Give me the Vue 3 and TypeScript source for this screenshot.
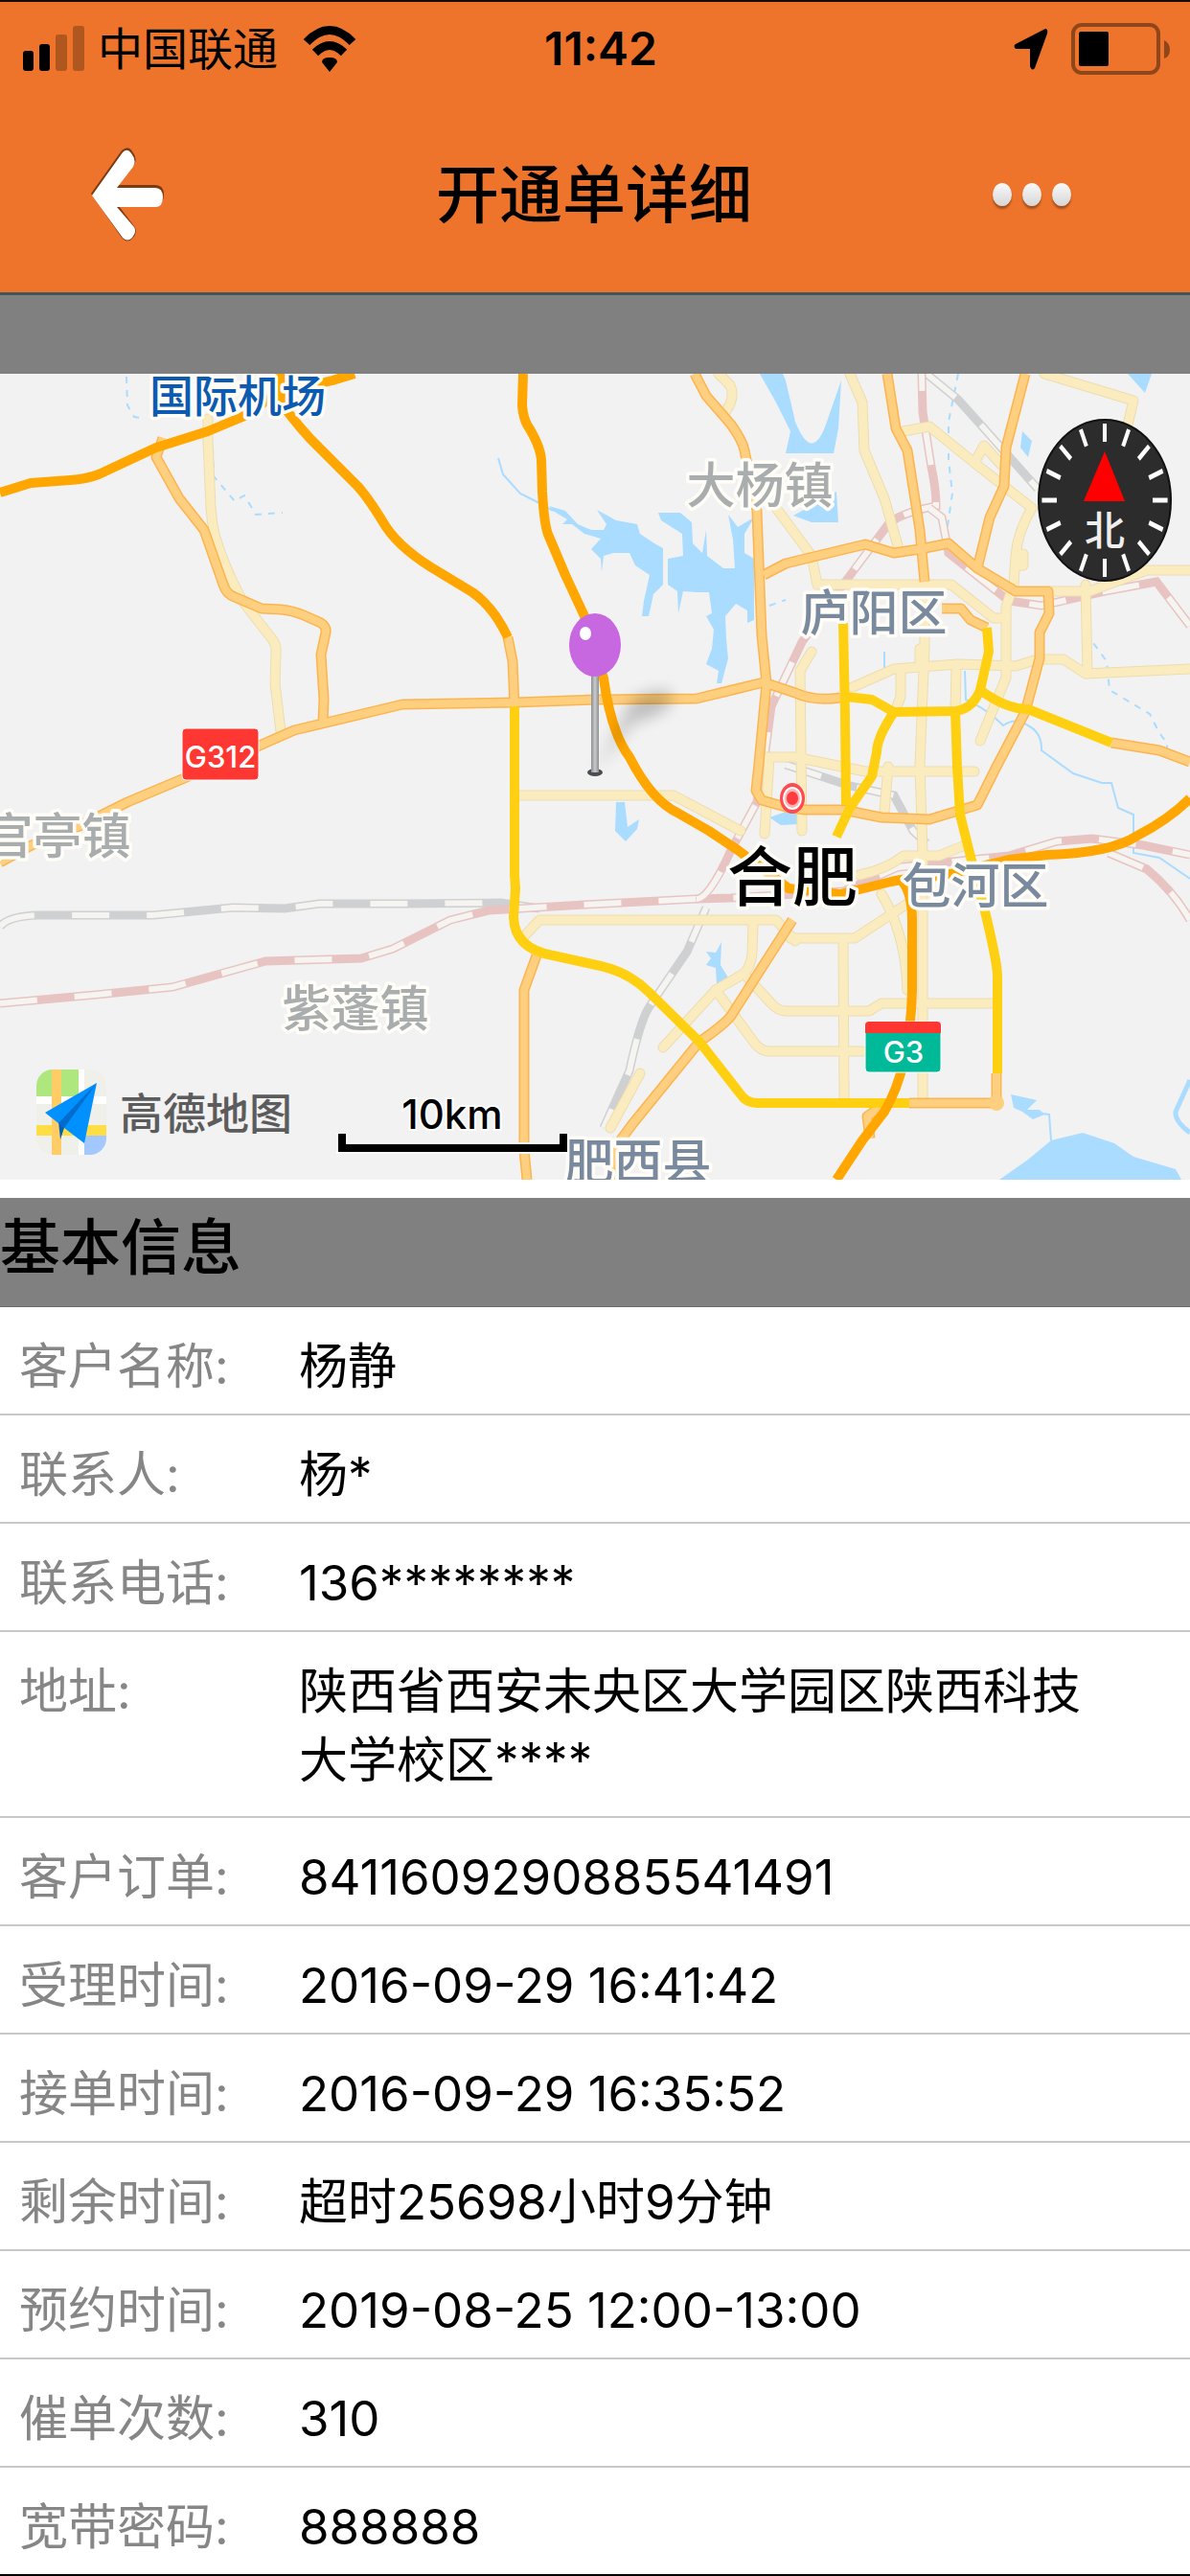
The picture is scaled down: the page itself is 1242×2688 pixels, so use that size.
<script setup lang="ts">
interface Field {
  label: string
  value: string
}

interface Place {
  name: string
  x: number
  y: number
  kind: string
}

const fields: Field[] = [
  { label: '客户名称:', value: '杨静' },
  { label: '联系人:', value: '杨*' },
  { label: '联系电话:', value: '136********' },
  { label: '地址:', value: '陕西省西安未央区大学园区陕西科技大学校区****' },
  { label: '客户订单:', value: '8411609290885541491' },
  { label: '受理时间:', value: '2016-09-29 16:41:42' },
  { label: '接单时间:', value: '2016-09-29 16:35:52' },
  { label: '剩余时间:', value: '超时25698小时9分钟' },
  { label: '预约时间:', value: '2019-08-25 12:00-13:00' },
  { label: '催单次数:', value: '310' },
  { label: '宽带密码:', value: '888888' },
]

const places: Place[] = [
  { name: '国际机场', x: 248, y: 40, kind: 'airport' },
  { name: '大杨镇', x: 793, y: 135, kind: 'town' },
  { name: '官亭镇', x: 60, y: 501, kind: 'town' },
  { name: '紫蓬镇', x: 371, y: 681, kind: 'town' },
  { name: '庐阳区', x: 912, y: 268, kind: 'district' },
  { name: '包河区', x: 1018, y: 553, kind: 'district' },
  { name: '肥西县', x: 666, y: 841, kind: 'district' },
  { name: '合肥', x: 827, y: 550, kind: 'city' },
]

const streams: string[] = [
  'M520 88L525 105L543 125L563 135L577 143',
  'M1007 310L1008 340Q1030 350 1047 367Q1060 358 1073 367Q1088 375 1087 393L1120 417L1150 427L1160 427L1167 453L1183 460V500L1210 505L1242 527',
  'M1073 770L1095 773L1097 800',
  'M923 290V313M968 187L978 175',
]

const dashedStreams: string[] = [
  'M132 3L133 33L140 45L152 47',
  'M222 77L223 107L245 133L255 127L267 147L295 145',
  'M803 242L820 236M1000 0L990 50L990 90L994 125L988 165',
  'M1133 270L1155 300L1158 330L1200 355L1210 375L1218 385V400',
]

const lakes: string[] = [
  'M623 142L643 153L665 157L668 167L683 177L692 182V220L682 230L677 253H670L672 237L678 210L663 200L657 187H640L630 190L628 207L627 193L617 183L627 172L610 167L597 157H587L592 152L577 143L573 138L590 143L603 157L617 163H630L633 157Z',
  'M687 145H710L722 155L723 177L733 187L737 163L738 190L755 203H767L765 173L760 147L770 160L787 150L777 167V187L787 193V257L780 260V247L768 240L757 253L758 277L760 297L753 323H748L750 310L737 303L743 287L745 267L737 253L743 250L740 228H727L713 227L708 250L707 227L697 220V193L713 190L712 167L690 153Z',
  'M793 0H817L820 7L830 50Q848 95 863 50L878 7L875 57L870 83H820L825 60L810 30Z',
  'M828 148L873 123L875 155H847Z',
  'M643 447H652L655 473L667 465L665 475L653 488L642 477Z',
  'M737 603L747 604L753 593L752 617L760 630L748 637L747 620L737 617L742 610Z',
  'M803 463L820 457L834 455V470L815 471Z',
  'M1043 841L1073 820L1097 800L1130 792L1163 803L1183 817L1227 830L1233 841Z',
  'M1055 752L1082 758L1072 768H1085L1090 773L1078 778L1067 770L1058 766Z',
  'M1177 0H1202L1195 20Z',
  'M1067 60L1077 70L1073 87L1065 77Z',
]

const localRoads: string[] = [
  'M217 47V70L220 140Q222 165 227 177Q235 203 253 237L284 277Q289 283 288 293L287 323L293 373',
  'M540 440H703L773 477',
  'M547 587L563 570H810L830 592',
  'M786 573L785 605Q783 623 773 628L747 643L692 703',
  'M780 630L805 657Q812 665 820 665H907L920 657H1037',
  'M747 643L785 695Q793 707 803 707H900',
  'M668 730L637 787',
  'M825 589H892L947 553',
  'M880 590L881 757',
  'M963 757V500L960 410L962 357L965 287V217',
  'M920 543Q945 583 947 643',
  'M897 523Q925 517 943 503H980L1007 492',
  'M798 480L803 400M800 400H830L903 415H1017',
  'M837 477L835 310L847 290',
  'M890 327L933 308L1000 303L1060 305L1083 298H1110L1133 313L1242 308',
  'M1133 220L1135 313',
  'M887 0L900 30L902 80L923 130L938 183',
  'M943 60L970 55L1017 93L1077 140Q1062 165 1060 190L1058 220L1050 243V317L1023 383',
  'M1090 0L1183 28L1177 53',
  'M1095 227H1137L1197 205H1242',
  'M810 140L847 190L853 220H993L1037 255H1050',
  'M750 0L762 12Q768 25 757 40',
  'M940 310V337L935 350M998 310L997 350',
  'M927 410L923 457M1017 93L1027 75L1045 95',
  'M960 300V287M1063 200H1068V188',
]

const mainRoads: string[] = [
  'M170 67L163 87L187 130L213 163L233 220Q236 230 245 233L273 245L293 246Q305 247 317 252L335 260Q341 264 340 270L335 293L338 340L337 363',
  'M0 510L33 492L83 472L133 447L190 423L273 387L307 372L420 345L537 343L623 340L727 339L797 322L830 333Q850 342 877 338',
  'M725 0L737 23L763 53Q775 70 777 80L790 143L792 197L795 273L800 323L792 407L789 435L795 445L820 452L840 455H880L920 463L970 465L1020 450L1040 410L1070 353L1085 297V270L1095 250L1094 227H1060L1020 203L990 177L960 183L933 187L903 178L853 190L820 198L797 210',
  'M926 0L935 57L947 80L960 163L965 217',
  'M1070 0L1050 77L1048 117L1033 150L1020 203',
  'M983 245H1003L1013 257L1030 265',
  'M530 275L535 300L537 347',
  'M560 607L547 643V810L550 841',
  'M827 570L793 623L763 670Q755 680 730 697L660 783L640 810L636 841',
  'M949 761H1040V730',
  'M1160 385L1210 393L1242 405',
  'M923 762L905 775L908 798',
]

const ringRoads: string[] = [
  'M537 347V523L538 537L536 567Q537 600 577 607L627 618Q657 625 677 645L730 697L773 752Q779 761 790 761H949',
  'M1041 730V627Q1040 610 1027 557L1012 500L1002 460L999 410L997 352',
  'M1030 265L1032 290L1023 330Q1015 350 997 352L933 353L910 340L883 337',
  'M1023 330Q1050 350 1073 350L1160 385',
  'M880 260L882 357L883 450',
  'M933 353Q915 380 915 395L910 420L887 453L873 483',
]

const highways: string[] = [
  'M0 124L32 114L73 111Q90 110 103 105L163 77L217 60L253 45L290 20L347 7L370 0',
  'M292 0L293 30Q315 60 333 77L373 117Q385 130 403 160Q420 185 460 208L493 228Q515 243 530 275',
  'M546 0L545 33Q546 45 550 53Q564 75 565 90L566 123Q568 160 573 170L590 210L610 253L630 318Q638 375 657 400Q680 445 707 458L740 477L770 497L823 537L877 543L930 530Q940 528 940 528Q952 540 952 570V643Q950 725 923 770L900 800L873 841',
  'M940 528L987 523L1053 507L1093 502Q1160 500 1187 482Q1220 465 1242 443',
]

const greyRails: string[] = [
  'M0 577Q8 566 40 565H160L243 557L297 558L333 553H420L523 552L563 558',
  'M967 0L1000 27L1027 57L1083 120',
  'M737 557L717 603L678 660Q668 675 657 727L630 787',
  'M820 408L887 430L933 440L953 477L967 490',
]

const pinkRails: string[] = [
  'M0 657L100 648L180 640L277 613L377 610L410 600L470 570L510 560L610 554L727 548L763 547L880 540L937 515L1053 503L1103 488L1140 485L1193 492L1242 502',
  'M727 548Q740 548 763 497L790 447L798 400L805 347L837 280L880 220L927 157Q940 145 977 138Q977 120 972 97L963 40L962 0',
  'M970 140L983 150L990 187L1053 237L1087 242L1153 227L1207 217L1242 263',
  'M1157 500L1197 517Q1225 540 1242 570',
]

const ticks: number[] = Array.from({ length: 16 }, (_, i) => i * 22.5)
</script>

<template>
  <div class="screen">
    <header class="top">
      <div class="status">
        <div class="status-left">
          <svg class="signal" viewBox="0 0 64 48" width="64" height="48" aria-hidden="true">
            <rect x="0" y="26" width="11" height="21" rx="3" />
            <rect x="17" y="19" width="11" height="28" rx="3" />
            <rect x="34" y="9" width="12" height="38" rx="3" fill="#b0561f" />
            <rect x="52" y="0" width="12" height="47" rx="3" fill="#b0561f" />
          </svg>
          <span class="carrier">中国联通</span>
          <svg class="wifi" viewBox="0 0 56 48" width="56" height="48" aria-hidden="true">
            <path d="M4 17Q28 -8 52 17" fill="none" stroke="#000" stroke-width="9" />
            <path d="M13 28Q28 13 43 28" fill="none" stroke="#000" stroke-width="9" />
            <path d="M28 48L20 38Q20 33 28 33Q36 33 36 38Z" />
          </svg>
        </div>
        <time class="clock">11:42</time>
        <div class="status-right">
          <svg viewBox="0 0 36 44" width="36" height="44" aria-hidden="true">
            <path d="M33 1Q36 1 35 6L22 42Q19 46 17 40V22H2Q-1 19 2 17Z" />
          </svg>
          <svg class="battery" viewBox="0 0 104 54" width="104" height="54" aria-hidden="true">
            <rect x="2" y="2" width="89" height="50" rx="9" fill="none" stroke="#8f461a" stroke-width="4" />
            <rect x="8" y="9" width="31" height="36" rx="2" />
            <path d="M97 18Q103 21 103 28T97 37Z" fill="#8f461a" />
          </svg>
        </div>
      </div>
      <nav class="bar">
        <button class="back" type="button" aria-label="返回">
          <svg viewBox="0 0 80 98" width="80" height="98" aria-hidden="true">
            <path class="arrow-shadow" d="M1 48L33 3Q40 -3 44 4Q50 11 46 18L29 39H68Q77 39 77 49T68 61H30L46 82Q50 88 45 94Q39 101 33 94Z" />
            <path d="M2 50L34 5Q39 0 43 6Q49 13 45 20L28 42H68Q76 42 76 52T68 62H28L46 83Q49 88 44 94Q39 99 34 94Z" fill="#fff" />
          </svg>
        </button>
        <h1 class="title">开通单详细</h1>
        <button class="more" type="button" aria-label="更多">
          <span class="dot"></span>
          <span class="dot"></span>
          <span class="dot"></span>
        </button>
      </nav>
    </header>

    <div class="band"></div>

    <section class="map-section" aria-label="地图">
      <svg class="map" viewBox="0 0 1242 841">
        <defs>
          <linearGradient id="stick" x1="0" x2="1" y1="0" y2="0">
            <stop offset="0" stop-color="#8b8e92" />
            <stop offset="0.5" stop-color="#c9cacc" />
            <stop offset="1" stop-color="#8b8e92" />
          </linearGradient>
          <filter id="soft" x="-50%" y="-50%" width="200%" height="200%">
            <feGaussianBlur stdDeviation="8" />
          </filter>
          <clipPath id="tile">
            <rect x="38" y="726" width="73" height="89" rx="17" />
          </clipPath>
        </defs>

        <rect width="1242" height="841" fill="#f2f2f2" />
        <path v-for="d in lakes" :key="d" :d="d" fill="#aadcff" />
        <path v-for="d in streams" :key="d" class="stream" :d="d" />
        <path v-for="d in dashedStreams" :key="d" class="stream dashed" :d="d" />
        <path class="stream wide" d="M1242 737L1227 770Q1226 780 1242 792" />

        <template v-for="d in greyRails" :key="d">
          <path class="rail grey" :d="d" />
          <path class="rail-gap" :d="d" />
        </template>
        <template v-for="d in pinkRails" :key="d">
          <path class="rail pink" :d="d" />
          <path class="rail-gap" :d="d" />
        </template>

        <path v-for="d in localRoads" :key="'e' + d" class="road local-edge" :d="d" />
        <path v-for="d in localRoads" :key="d" class="road local" :d="d" />
        <path v-for="d in mainRoads" :key="'e' + d" class="road main-edge" :d="d" />
        <path v-for="d in mainRoads" :key="d" class="road main" :d="d" />
        <circle cx="1040" cy="761" r="8" fill="#ffcf80" />
        <path v-for="d in ringRoads" :key="d" class="road ring" :d="d" />
        <path v-for="d in highways" :key="d" class="road highway" :d="d" />

        <ellipse cx="827" cy="443" rx="13" ry="16" fill="#ff4a4f" />
        <ellipse cx="827" cy="443" rx="10" ry="12" fill="#fff" />
        <ellipse cx="827" cy="443" rx="8" ry="10" fill="#ffb0b0" />
        <ellipse cx="827" cy="443" rx="6" ry="7" fill="#ff3b41" />

        <text v-for="p in places" :key="p.name" :class="['place', p.kind]" :x="p.x" :y="p.y">{{ p.name }}</text>

        <rect x="190" y="370" width="80" height="54" rx="4" fill="#ff3733" stroke="#fff" stroke-width="1" />
        <text class="shield" x="230" y="411">G312</text>
        <rect x="903" y="676" width="79" height="53" rx="4" fill="#00b999" stroke="#fff" stroke-width="1" />
        <path d="M903 688V680Q903 676 907 676H978Q982 676 982 680V688Z" fill="#ff3733" />
        <text class="shield" x="943" y="719">G3</text>

        <path d="M622 415L655 350Q660 332 695 331Q712 340 685 356L660 364Z" fill="#000" opacity="0.22" filter="url(#soft)" />
        <ellipse cx="621" cy="416" rx="8" ry="4" fill="#4a4c4e" />
        <rect x="617" y="312" width="8" height="104" fill="url(#stick)" />
        <ellipse cx="621" cy="283" rx="27" ry="33" fill="#c768e0" />
        <ellipse cx="611" cy="271" rx="6" ry="7" fill="#fff" />

        <ellipse cx="1153" cy="132" rx="69" ry="84" fill="#2c2c2c" stroke="#111" stroke-width="2" />
        <g transform="translate(1153 132) scale(0.82 1)">
          <line v-for="a in ticks" :key="a" x1="0" y1="-80" x2="0" y2="-61" :transform="`rotate(${a})`" stroke="#fff" stroke-width="5" />
        </g>
        <path d="M1153 81L1174 133H1131Z" fill="#f00" />
        <text class="north" x="1153" y="179">北</text>

        <g clip-path="url(#tile)">
          <rect x="38" y="726" width="73" height="89" fill="#f0f0ea" />
          <rect x="38" y="726" width="44" height="28" fill="#afe77f" />
          <rect x="82" y="726" width="6" height="89" fill="#fff" />
          <rect x="38" y="754" width="73" height="8" fill="#fff" />
          <rect x="88" y="795" width="23" height="20" fill="#a3c8ff" />
          <rect x="38" y="784" width="73" height="11" fill="#ffde45" />
          <rect x="54" y="726" width="10" height="89" fill="#ffcc66" />
        </g>
        <path d="M61 780L67 787L63 799Z" fill="#0560b0" />
        <path d="M47 771L101 740L88 803L67 787L61 782Z" fill="#0090ff" />
        <path d="M101 740L61 782L67 787Z" fill="#006dcc" />
        <text class="brand" x="125" y="789">高德地图</text>

        <path class="scale-halo" d="M357 793V808H588V793" />
        <path class="scale" d="M357 793V808H588V793" />
        <text class="scale-text" x="472" y="788">10km</text>
      </svg>
    </section>

    <section class="details">
      <h2 class="section-title">基本信息</h2>
      <dl class="list">
        <div v-for="f in fields" :key="f.label" class="row">
          <dt class="label">{{ f.label }}</dt>
          <dd class="value">{{ f.value }}</dd>
        </div>
      </dl>
    </section>
  </div>
</template>

<style>
body {
  margin: 0;
  background: #fff;
}
</style>

<style scoped>
.screen {
  font-family: Inter, "Noto Sans CJK SC", sans-serif;
  color: #000;
  background: #fff;
}

.top {
  background: #ee742b;
  border-top: 2px solid #1a0d05;
  border-bottom: 3px solid #3f555c;
}

.status {
  display: grid;
  grid-template-columns: 1fr auto 1fr;
  align-items: center;
  height: 98px;
  padding: 0 12px 0 24px;
}

.status-left,
.status-right {
  display: flex;
  align-items: center;
}

.status-right {
  justify-content: flex-end;
  gap: 24px;
}

.carrier {
  margin: 0 26px 0 14px;
  font-size: 47px;
  line-height: 64px;
}

.clock {
  font-size: 48px;
  line-height: 64px;
  font-weight: 600;
}

.battery {
  margin-right: 8px;
}

.bar {
  display: grid;
  grid-template-columns: 1fr auto 1fr;
  align-items: center;
  height: 205px;
  padding: 0 124px 0 94px;
}

.back,
.more {
  padding: 0;
  border: 0;
  background: none;
}

.back {
  justify-self: start;
  display: flex;
}

.arrow-shadow {
  fill: #7a3a12;
}

.more {
  justify-self: end;
  display: flex;
  gap: 11px;
}

.dot {
  width: 20px;
  height: 24px;
  border-radius: 50%;
  background: linear-gradient(#fafafa, #d6d6d6);
  box-shadow: 0 3px 2px #a5501e;
}

.title {
  margin: 0 0 0 28px;
  font-size: 66px;
  line-height: 96px;
  font-weight: 500;
}

.band {
  height: 82px;
  background: #808080;
}

.map-section {
  padding-bottom: 19px;
}

.map {
  display: block;
  width: 100%;
  height: auto;
}

.stream {
  fill: none;
  stroke: #aadcff;
  stroke-width: 2;
}

.stream.dashed {
  stroke-dasharray: 7 7;
}

.stream.wide {
  stroke-width: 5;
}

.rail {
  fill: none;
  stroke-width: 9;
}

.rail.grey {
  stroke: #cfd0d1;
}

.rail.pink {
  stroke: #e7c4c2;
}

.rail-gap {
  fill: none;
  stroke: #f6f4f0;
  stroke-width: 6;
  stroke-dasharray: 39 39;
}

.road {
  fill: none;
  stroke-width: 9;
  stroke-linejoin: round;
}

.local-edge {
  stroke: #eddcae;
  stroke-width: 11;
  stroke-linecap: round;
}

.local {
  stroke: #fbecc0;
  stroke-linecap: round;
}

.main-edge {
  stroke: #fbb550;
  stroke-width: 11;
}

.main {
  stroke: #ffcf80;
  stroke-width: 8;
}

.ring {
  stroke: #ffd012;
  stroke-width: 10;
}

.highway {
  stroke: #ffa600;
  stroke-width: 10;
}

.place {
  text-anchor: middle;
  font-size: 51px;
  font-weight: 500;
  stroke: #fffdf8;
  stroke-width: 7;
  stroke-linejoin: round;
  paint-order: stroke;
}

.place.town {
  fill: #a9adad;
}

.place.district {
  fill: #7a8a9e;
}

.place.airport {
  fill: #0c5bb0;
  font-size: 46px;
}

.place.city {
  fill: #000;
  font-size: 68px;
}

.shield {
  fill: #fff;
  font-size: 31px;
  font-weight: 500;
  text-anchor: middle;
}

.north {
  fill: #eee;
  font-size: 42px;
  font-weight: 500;
  text-anchor: middle;
}

.brand {
  fill: #5c5c5c;
  font-size: 45px;
  font-weight: 500;
}

.scale,
.scale-halo {
  fill: none;
  stroke: #000;
  stroke-width: 8;
}

.scale-halo {
  stroke: #fff;
  stroke-width: 12;
}

.scale-text {
  fill: #000;
  font-size: 42px;
  font-weight: 500;
  text-anchor: middle;
  stroke: #fff;
  stroke-width: 4;
  paint-order: stroke;
}

.section-title {
  margin: 0;
  padding: 9px 0 20px;
  border-bottom: 1px solid #6c6c6c;
  background: #808080;
  font-size: 63px;
  line-height: 84px;
  font-weight: 500;
}

.list {
  margin: 0;
}

.row {
  display: flex;
  align-items: flex-start;
  padding: 26px 100px 13px 20px;
  border-bottom: 2px solid #c8c8cc;
  font-size: 51px;
  line-height: 72px;
}

.row:nth-child(4) {
  padding-bottom: 22px;
}

.row:last-child {
  border-bottom-color: #000;
}

.label {
  flex: 0 0 292px;
  color: #868686;
}

.value {
  flex: 1;
  margin: 0;
}
</style>
